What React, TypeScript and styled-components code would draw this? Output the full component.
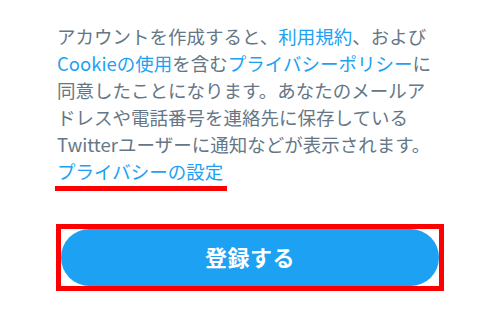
import React from "react";
import styled, { createGlobalStyle } from "styled-components";

const Global = createGlobalStyle`
  html, body { margin: 0; padding: 0; background: #ffffff; }
  body { font-family: "Noto Sans CJK JP", "Noto Sans", sans-serif; }
`;

const Page = styled.div`
  width: 500px;
  height: 330px;
  box-sizing: border-box;
  padding: 23px 0 0 57px;
  display: flex;
  flex-direction: column;
  align-items: flex-start;
`;

const Paragraph = styled.p`
  margin: 0;
  font-size: 18.5px;
  line-height: 27px;
  color: #657786;
  white-space: nowrap;
`;

const Link = styled.span`
  color: #1da1f2;
`;

const Highlight = styled.div`
  width: 172px;
  height: 5px;
  margin: 1px 0 0 -2px;
  background: #ff0000;
`;

const Frame = styled.div`
  margin: 33px 0 0 -1px;
  width: 388px;
  height: 67px;
  box-sizing: border-box;
  border: 5px solid #ff0000;
  overflow: hidden;
  display: flex;
`;

const SignupButton = styled.button`
  flex: 1;
  border: none;
  margin: 0;
  padding: 0 0 3px 0;
  border-radius: 29px;
  background: #1da1f2;
  color: #ffffff;
  font-family: "Noto Sans CJK JP", sans-serif;
  font-weight: 700;
  font-size: 22px;
  letter-spacing: 0.5px;
  cursor: pointer;
`;

export default function App() {
  return (
    <>
      <Global />
      <Page>
        <Paragraph>
          アカウントを作成すると、<Link>利用規約</Link>、および
          <br />
          <Link>Cookieの使用</Link>を含む<Link>プライバシーポリシー</Link>に
          <br />
          同意したことになります。あなたのメールア
          <br />
          ドレスや電話番号を連絡先に保存している
          <br />
          Twitterユーザーに通知などが表示されます。
          <br />
          <Link>プライバシーの設定</Link>
        </Paragraph>
        <Highlight />
        <Frame>
          <SignupButton>登録する</SignupButton>
        </Frame>
      </Page>
    </>
  );
}
